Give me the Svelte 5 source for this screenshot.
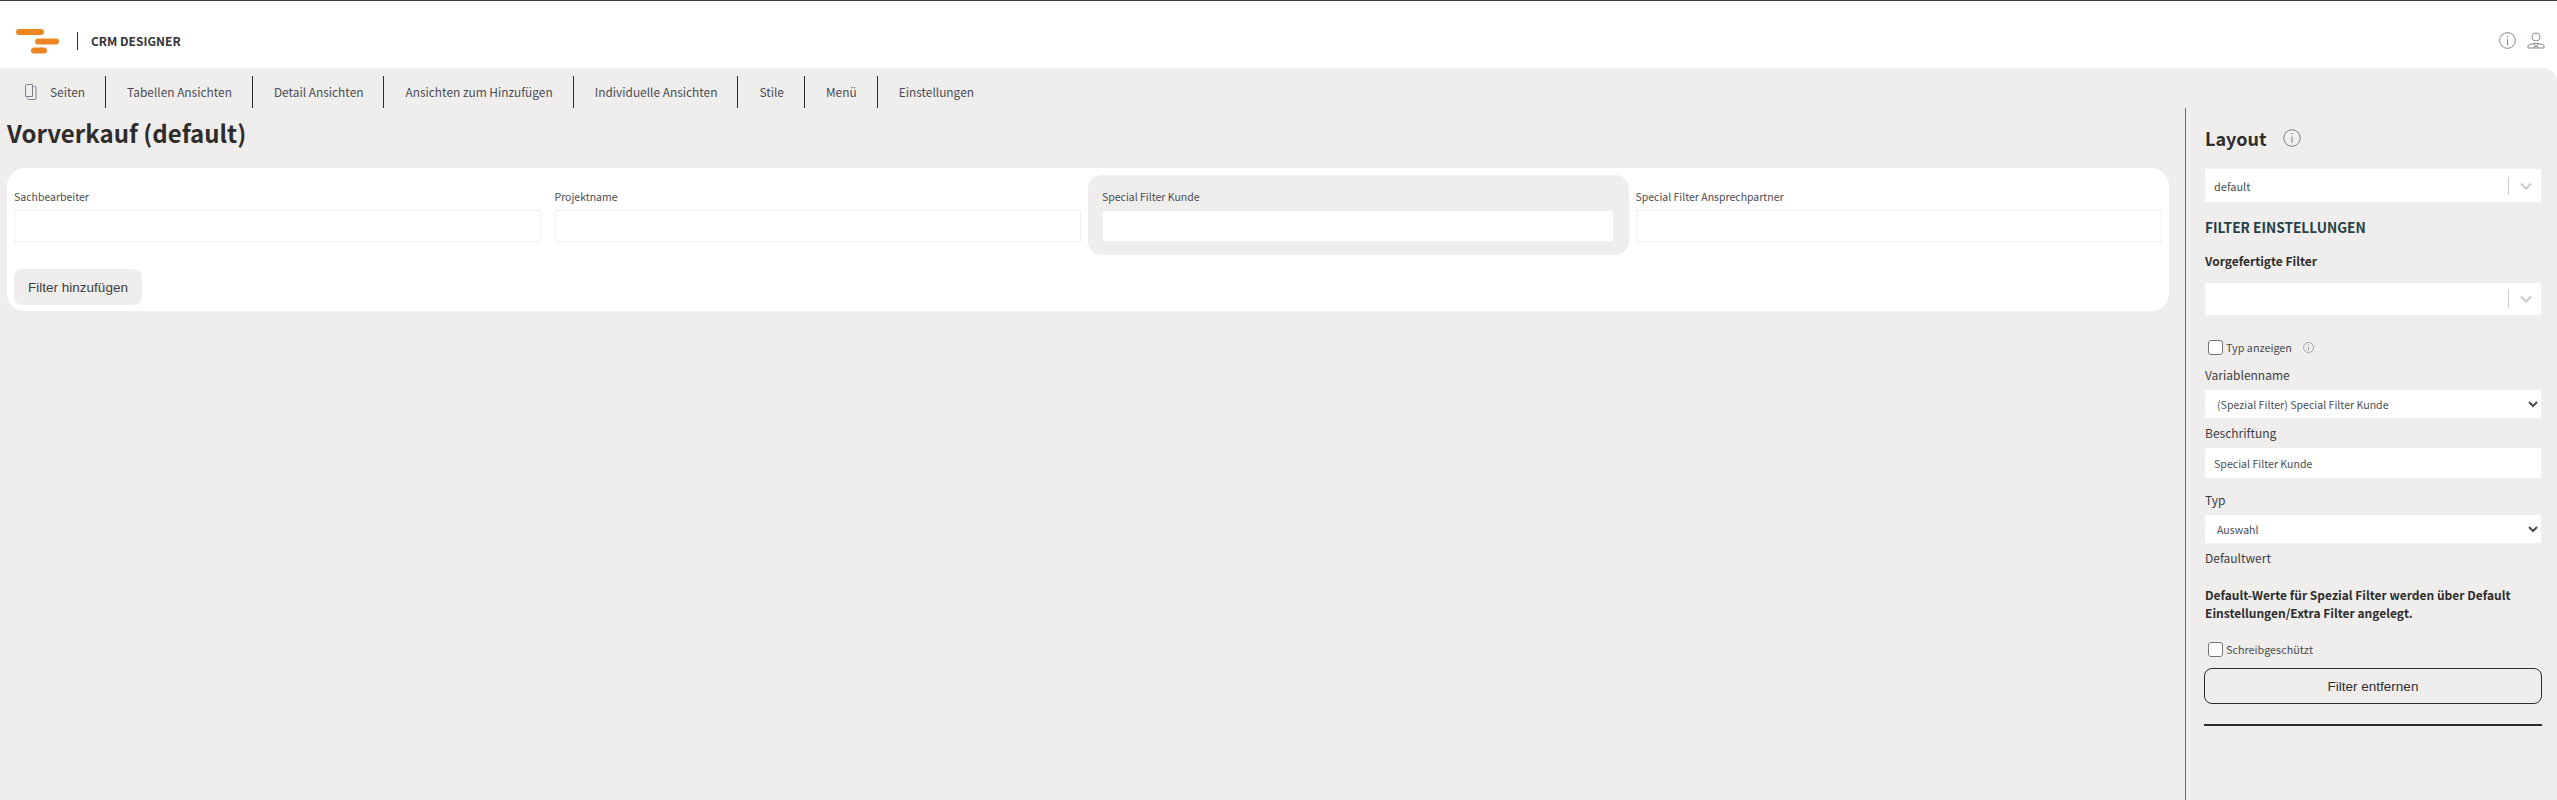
<script lang="ts">
	const tabs = ['Tabellen Ansichten', 'Detail Ansichten', 'Ansichten zum Hinzufügen', 'Individuelle Ansichten', 'Stile', 'Menü', 'Einstellungen'];
	const filters = [
		{ label: 'Sachbearbeiter', active: false },
		{ label: 'Projektname', active: false },
		{ label: 'Special Filter Kunde', active: true },
		{ label: 'Special Filter Ansprechpartner', active: false }
	];
</script>

{#snippet info(size)}
	<svg width={size} height={size} viewBox="0 0 18 18" fill="none" stroke="#77808a" stroke-width="1">
		<circle cx="9" cy="9" r="8.300" />
		<path d="M9 7.500v6.500M9 4v1.500" />
	</svg>
{/snippet}

{#snippet combo(text)}
	<div class="combo">
		<span>{text}</span>
		<i class="bar"></i>
		<svg width="12" height="8" viewBox="0 0 12 8" fill="none" stroke="#c9c9c9" stroke-width="2"><path d="M1 1.500l5 5 5-5" /></svg>
	</div>
{/snippet}

<header class="top">
	<div class="brand">
		<svg class="logo" width="44" height="25" viewBox="0 0 44 25">
			<rect x="0" y="0" width="28" height="6" rx="3" fill="#ed8522" />
			<rect x="19" y="9.500" width="24" height="6" rx="3" fill="#ed8522" />
			<rect x="15" y="18.500" width="16" height="6" rx="3" fill="#ed8522" />
		</svg>
		<span class="name">CRM DESIGNER</span>
	</div>
	<div class="tools">
		{@render info(16)}
		<svg width="18" height="17" viewBox="0 0 18 17" fill="none" stroke="#8a8f96" stroke-width="1">
			<circle cx="9" cy="5" r="4" />
			<path d="M1 16v-2.500l5-2h6l5 2V16z" />
			<path d="M6 12l6 4M12 12l-6 4" />
		</svg>
	</div>
</header>

<div class="shell">
	<nav class="tabs">
		<button class="tab first">
			<svg width="12" height="16" viewBox="0 0 12 16" fill="none" stroke="#7d848c" stroke-width="1">
				<path d="M.5 1.500a1 1 0 0 1 1-1h6v12h-7z" />
				<path d="M8.500 2.500h1.500a1 1 0 0 1 1 1v11a1 1 0 0 1-1 1H3.500a1 1 0 0 1-1-1v-1" />
			</svg>
			Seiten
		</button>
		{#each tabs as t}
			<button class="tab">{t}</button>
		{/each}
	</nav>

	<div class="body">
		<main class="content">
			<h1>Vorverkauf (default)</h1>
			<section class="card">
				<div class="filters">
					{#each filters as f}
						<div class="filter" class:active={f.active}>
							<label for={f.label}>{f.label}</label>
							<input id={f.label} type="text" />
						</div>
					{/each}
				</div>
				<button class="add">Filter hinzufügen</button>
			</section>
		</main>

		<aside class="side">
			<div class="side-title">
				<h2>Layout</h2>
				{@render info(18)}
			</div>
			{@render combo('default')}
			<h3>FILTER EINSTELLUNGEN</h3>
			<div class="strong preset">Vorgefertigte Filter</div>
			{@render combo('')}
			<label class="check first-check">
				<input type="checkbox" />
				Typ anzeigen
				<span class="hint">{@render info(11)}</span>
			</label>
			<label class="field-label" for="var">Variablenname</label>
			<select id="var" class="sel"><option>(Spezial Filter) Special Filter Kunde</option></select>
			<label class="field-label" for="cap">Beschriftung</label>
			<input id="cap" class="txt" type="text" value="Special Filter Kunde" />
			<label class="field-label typ" for="typ">Typ</label>
			<select id="typ" class="sel"><option>Auswahl</option></select>
			<div class="field-label">Defaultwert</div>
			<p class="strong note">Default-Werte für Spezial Filter werden über Default Einstellungen/Extra Filter angelegt.</p>
			<label class="check last-check">
				<input type="checkbox" />
				Schreibgeschützt
			</label>
			<button class="remove">Filter entfernen</button>
			<hr />
		</aside>
	</div>
</div>

<style>
	:global(body) {
		margin: 0;
		background: #fff;
		color: #2f2d2c;
		font-family: 'Noto Sans CJK SC', 'Noto Sans', sans-serif;
	}
	.top {
		height: 67px;
		border-top: 1px solid #403a3d;
		display: flex;
		align-items: center;
		justify-content: space-between;
		padding: 0 12px 0 16px;
	}
	.brand {
		display: flex;
		align-items: center;
		margin-top: 13px;
	}
	.name {
		margin-left: 17px;
		border-left: 1px solid #2f2d2c;
		padding-left: 13px;
		height: 18px;
		line-height: 18px;
		font-size: 12px;
		font-weight: 700;
		color: #32343a;
	}
	.tools {
		display: flex;
		gap: 11px;
		align-items: center;
		margin-top: 12px;
	}
	.tools > svg:first-child {
		width: 17px;
		height: 17px;
	}
	.shell {
		background: #f0eeec;
		border-top-right-radius: 14px;
		height: 732px;
		display: flex;
		flex-direction: column;
	}
	.tabs {
		display: flex;
		align-items: center;
		height: 40px;
		padding-top: 7px;
		box-sizing: border-box;
	}
	.tab {
		border: 0;
		border-left: 1px solid #2f2d2c;
		background: none;
		font: 400 11.900px/32px 'Noto Sans CJK SC', sans-serif;
		color: #4a4c52;
		padding: 0 20px 0 21px;
		height: 32px;
		white-space: nowrap;
	}
	.tab.first {
		border-left: 0;
		display: flex;
		align-items: center;
		gap: 13px;
		padding: 0 20px 0 25px;
	}
	.body {
		flex: 1;
		display: flex;
		min-height: 0;
	}
	.content {
		width: 2185px;
		box-sizing: border-box;
		padding: 0 16px 0 7px;
	}
	h1 {
		margin: 0;
		padding-top: 5px;
		font-size: 24px;
		line-height: 40px;
		font-weight: 700;
	}
	.card {
		margin-top: 15px;
		background: #fff;
		border-radius: 18px;
		padding-top: 7px;
		height: 143px;
		box-sizing: border-box;
	}
	.filters {
		display: grid;
		grid-template-columns: repeat(4, 1fr);
	}
	.filter {
		border-radius: 14px;
		padding: 12px 7px 13px;
		height: 80px;
		box-sizing: border-box;
	}
	.filter.active {
		background: #f0eeec;
		padding: 12px 15px 13px 14px;
	}
	.filter label {
		display: block;
		font-size: 10.500px;
		line-height: 20px;
		height: 23px;
		color: #4a4c52;
	}
	.filter input {
		display: block;
		width: 100%;
		height: 32px;
		box-sizing: border-box;
		border: 1px solid #f0eeec;
		background: #fff;
		outline: 0;
	}
	.add {
		margin: 14px 0 0 7px;
		width: 128px;
		height: 36px;
		border: 0;
		border-radius: 8px;
		background: #f0eeec;
		color: #3d3d42;
		font: 13.500px 'Liberation Sans', Arial, sans-serif;
	}
	.side {
		flex: 1;
		border-left: 1px solid #6f6c6a;
		padding: 0 16px 0 19px;
		display: flex;
		flex-direction: column;
	}
	.side-title {
		display: flex;
		align-items: center;
		gap: 16px;
		height: 40px;
		margin-top: 10px;
	}
	h2 {
		margin: 0;
		font-size: 18px;
		font-weight: 700;
	}
	.combo {
		height: 33px;
		background: #fff;
		display: flex;
		align-items: center;
		padding: 0 9px;
		font-size: 11px;
		color: #4a4c52;
		flex: none;
		margin-top: 11px;
		box-sizing: border-box;
	}
	.combo span {
		flex: 1;
	}
	.combo .bar {
		width: 1px;
		height: 18px;
		background: #ccc;
		margin-right: 11px;
	}
	h3 {
		margin: 13px 0 0;
		font-size: 13.700px;
		line-height: 24px;
		font-weight: 700;
		color: #244048;
	}
	.strong {
		font-size: 12px;
		font-weight: 700;
	}
	.preset {
		margin-top: 10px;
		line-height: 24px;
	}
	.preset + .combo {
		margin-top: 10px;
		height: 32px;
	}
	.check {
		display: flex;
		align-items: center;
		font-size: 10.800px;
		color: #4a4c52;
		height: 16px;
		padding-left: 3px;
	}
	.check input {
		appearance: none;
		width: 15px;
		height: 15px;
		margin: 0 3px 0 0;
		border: 1px solid #767676;
		border-radius: 3px;
		background: #fff;
	}
	.first-check {
		margin-top: 24px;
	}
	.hint {
		margin-left: 11px;
		display: flex;
	}
	.field-label {
		font-size: 12px;
		line-height: 20px;
		height: 20px;
		color: #3c3d42;
		margin-top: 5px;
	}
	.first-check + .field-label {
		margin-top: 10px;
	}
	.sel {
		height: 28px;
		margin-top: 5px;
		border: 0;
		border-radius: 0;
		background: #fff;
		font: 10.600px 'Noto Sans CJK SC', sans-serif;
		color: #4a4c52;
		padding: 0 4px 0 8px;
		flex: none;
		width: 100%;
	}
	.txt {
		height: 30px;
		margin-top: 5px;
		border: 0;
		outline: 0;
		background: #fff;
		font: 10.600px 'Noto Sans CJK SC', sans-serif;
		color: #4a4c52;
		padding: 0 9px;
		flex: none;
	}
	.typ {
		margin-top: 12px;
	}
	.note {
		margin: 18px 0 0;
		line-height: 18px;
	}
	.last-check {
		margin-top: 19px;
	}
	.remove {
		margin: 11px -1px 0;
		height: 36px;
		flex: none;
		border: 1px solid #2f2d2c;
		border-radius: 8px;
		background: none;
		color: #2f2d2c;
		font: 13.500px 'Liberation Sans', Arial, sans-serif;
	}
	hr {
		height: 2px;
		border: 0;
		background: #2f2d2c;
		margin: 20px -1px 0;
	}
</style>
